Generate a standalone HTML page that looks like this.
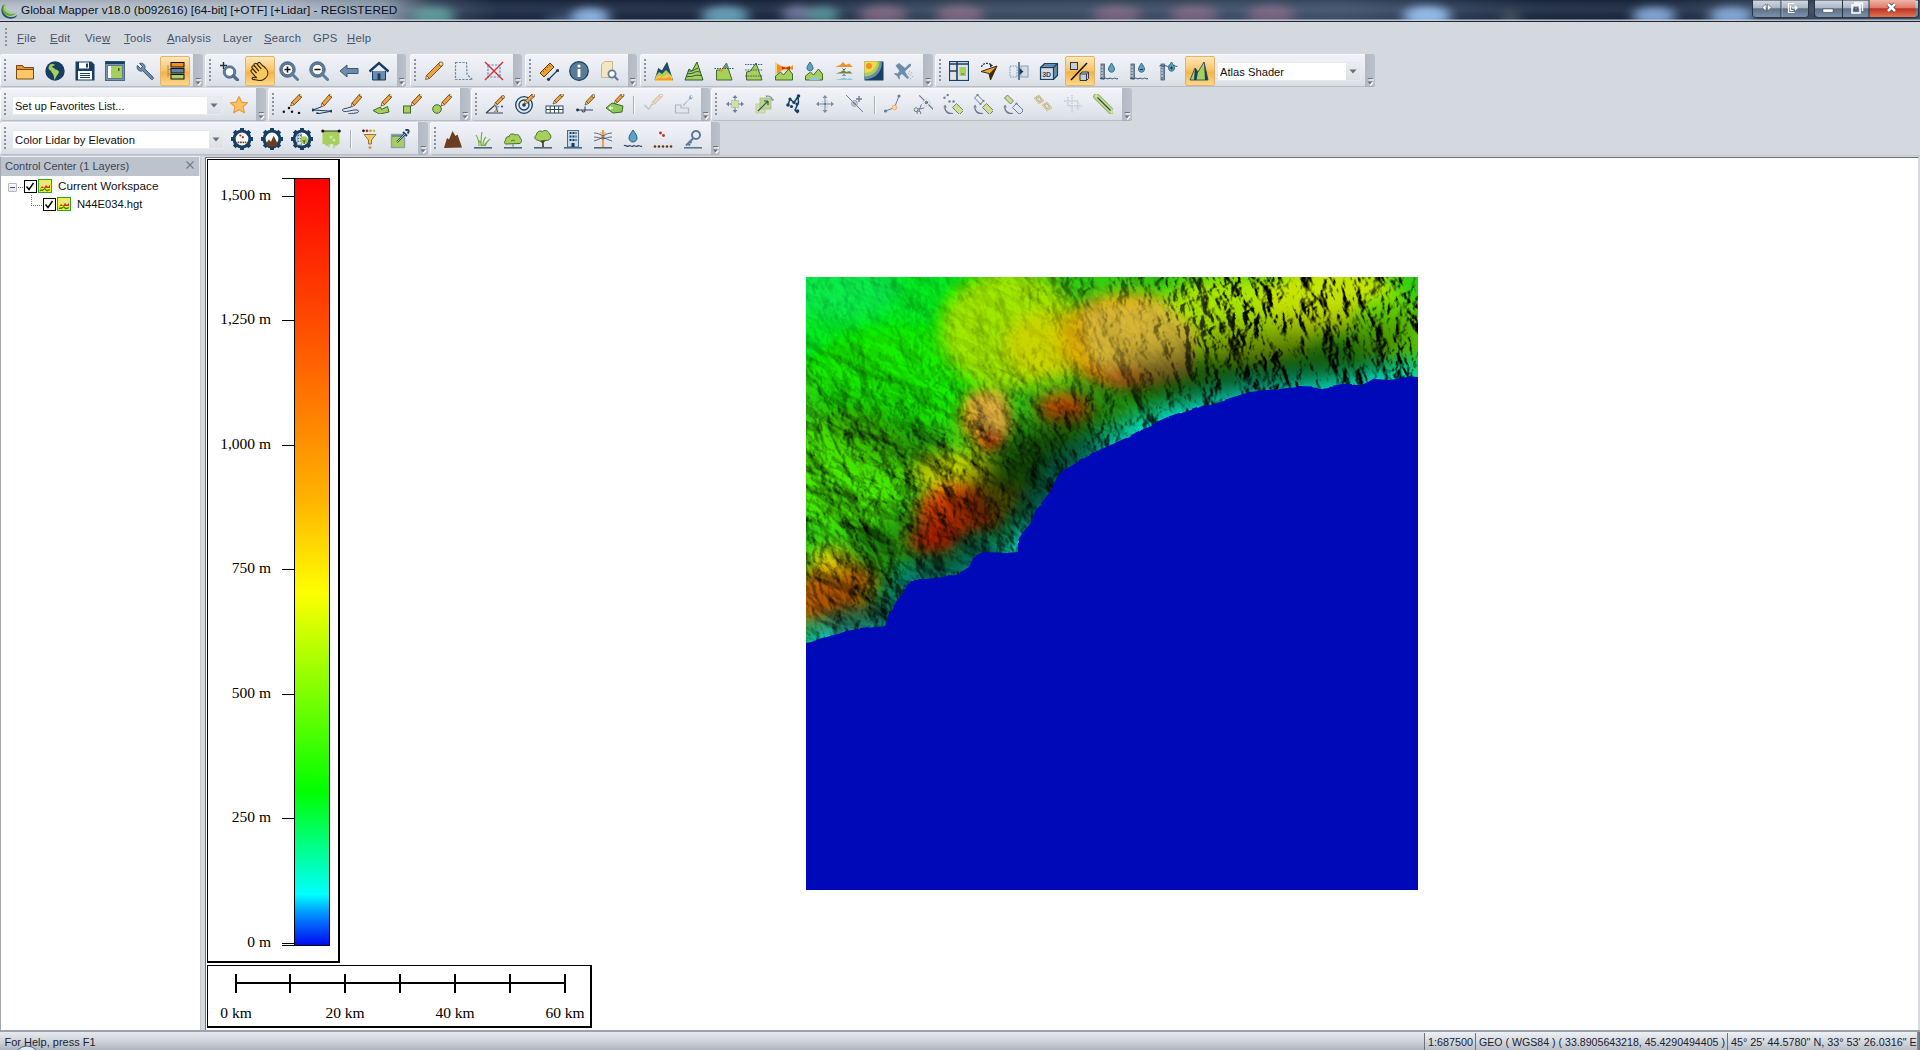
<!DOCTYPE html><html><head><meta charset="utf-8"><style>
*{margin:0;padding:0;box-sizing:border-box}
html,body{width:1920px;height:1050px;overflow:hidden;background:#d4d8df;font-family:"Liberation Sans",sans-serif;font-size:12px;color:#1e2a3a}
.a{position:absolute}
.menu{top:32px;font-size:11.3px;letter-spacing:.25px;color:#45536a;line-height:13px}
.menu u{text-decoration:underline;text-underline-offset:1px;text-decoration-thickness:1px}
.tb{position:absolute;background:linear-gradient(#f1f3f7,#e8ebf1 45%,#dfe3ea 80%,#d6dae2);border-radius:3px 0 0 3px;box-shadow:inset 1px 1px 0 #f8f9fb,inset 0 -1px 0 #b9bec6}
.tab{position:absolute;background:linear-gradient(90deg,#b3b9c3,#bcc2cb);border-radius:0 3px 3px 0;box-shadow:inset 0 -1px 0 #a9aeb7}
.grip{position:absolute;width:2px;background:repeating-linear-gradient(#8b929d 0 2px,transparent 2px 4px)}
.grips{position:absolute;width:2px;background:repeating-linear-gradient(transparent 0 1px,#fdfdfe 1px 3px,transparent 3px 4px)}
.ic{position:absolute;width:22px;height:22px}
.hl{position:absolute;width:30px;height:30px;border:1px solid #e2b46a;border-radius:2px;background:linear-gradient(#fde7b8,#f9c56e 45%,#f6b24a 55%,#fcd88c)}
.dd{position:absolute;background:#fff;border:1px solid #e3e6eb}
.ddb{position:absolute;background:linear-gradient(#eceef2,#dfe2e8);}
.ddtxt{position:absolute;font-size:11.5px;color:#111;line-height:14px}
.sep{position:absolute;width:1px;height:19px;background:#aab0ba;box-shadow:1px 0 0 #fbfcfd}
.serif{position:absolute;font-family:"Liberation Serif",serif;font-size:15.5px;color:#000;line-height:16px;white-space:nowrap}
</style></head><body>
<svg class="a" style="left:0;top:0" width="1920" height="21" viewBox="0 0 1920 21">
<defs><linearGradient id="tbg" x1="0" x2="1920" gradientUnits="userSpaceOnUse">
<stop offset="0" stop-color="#b8c3d0"/><stop offset=".14" stop-color="#b5c0ce"/><stop offset=".2" stop-color="#8e9db0"/><stop offset=".225" stop-color="#3a4a62"/><stop offset=".26" stop-color="#1c2a43"/>
<stop offset=".4" stop-color="#1b2841"/><stop offset=".46" stop-color="#2e3f58"/><stop offset=".5" stop-color="#38495f"/><stop offset=".7" stop-color="#3e506a"/><stop offset=".75" stop-color="#2e3e58"/>
<stop offset=".8" stop-color="#1c2a42"/><stop offset=".86" stop-color="#1a2740"/><stop offset=".92" stop-color="#34465f"/><stop offset="1" stop-color="#3c4e68"/></linearGradient>
<linearGradient id="tvg" x1="0" y1="0" x2="0" y2="1"><stop offset="0" stop-color="#000" stop-opacity=".12"/><stop offset=".5" stop-color="#fff" stop-opacity=".06"/><stop offset="1" stop-color="#000" stop-opacity="0"/></linearGradient>
<filter id="tblur" x="-50%" y="-100%" width="200%" height="300%"><feGaussianBlur stdDeviation="6 4"/></filter></defs>
<rect width="1920" height="21" fill="url(#tbg)"/><g filter="url(#tblur)"><ellipse cx="433" cy="16" rx="22" ry="9" fill="#5fa3a3" opacity="0.9"/><ellipse cx="560" cy="20" rx="14" ry="5" fill="#6a90c0" opacity="0.5"/><ellipse cx="590" cy="17" rx="20" ry="9" fill="#8db4e4" opacity="1"/><ellipse cx="725" cy="16" rx="24" ry="10" fill="#6aa8c2" opacity="0.9"/><ellipse cx="798" cy="14" rx="16" ry="9" fill="#7a80a8" opacity="0.8"/><ellipse cx="823" cy="15" rx="16" ry="9" fill="#5aa4a4" opacity="0.8"/><ellipse cx="883" cy="15" rx="24" ry="10" fill="#8a6a86" opacity="0.8"/><ellipse cx="960" cy="15" rx="24" ry="10" fill="#8a6a86" opacity="0.8"/><ellipse cx="1117" cy="15" rx="24" ry="10" fill="#8a6a8a" opacity="0.75"/><ellipse cx="1194" cy="15" rx="24" ry="10" fill="#8a6a8a" opacity="0.75"/><ellipse cx="1271" cy="15" rx="24" ry="10" fill="#8a6a8a" opacity="0.75"/><ellipse cx="1427" cy="16" rx="24" ry="10" fill="#92bbea" opacity="1"/><ellipse cx="1510" cy="18" rx="10" ry="6" fill="#8a8a8a" opacity="0.4"/><ellipse cx="1654" cy="16" rx="22" ry="9" fill="#8cb4e4" opacity="0.9"/><ellipse cx="1731" cy="16" rx="22" ry="9" fill="#8cb4e4" opacity="0.9"/></g><rect width="1920" height="21" fill="url(#tvg)"/>
<rect y="19.5" width="1920" height="1.5" fill="#d0d8e0" opacity=".85"/></svg>
<div class="a" style="left:0;top:21px;width:1920px;height:1px;background:#1f242c"></div>
<div class="a" style="left:21px;top:3px;font-size:11.8px;color:#0b1019;line-height:15px;white-space:nowrap">Global Mapper v18.0 (b092616) [64-bit] [+OTF] [+Lidar] - REGISTERED</div>
<svg class="a" style="left:0;top:1px" width="18" height="19" viewBox="0 0 18 19"><path d="M3 4C0 8 1 15 7 17s10-1 10-3c-2 2-7 3-10 1S2 9 5 5z" fill="#1d4e6e"/><path d="M4 3C1 7 2 13 7 14.5s8-1 9-2.5c-2 1-6 1.5-8 0S3 8 6 4.5z" fill="#6aaa3a"/><path d="M5 3.5C3 6 3.5 10 7 11.5c2 .8 5 .5 6.5-.5-2 0-4.5-.5-6-2S5 5 6.5 4z" fill="#a8d070"/></svg>
<svg class="a" style="left:1752px;top:0" width="168" height="20" viewBox="0 0 168 20">
<defs><linearGradient id="cb" x1="0" y1="0" x2="0" y2="1"><stop offset="0" stop-color="#d4dbe3"/><stop offset=".45" stop-color="#aab6c4"/><stop offset=".5" stop-color="#5d6f86"/><stop offset="1" stop-color="#7d93ad"/></linearGradient>
<linearGradient id="cr" x1="0" y1="0" x2="0" y2="1"><stop offset="0" stop-color="#f0b4a8"/><stop offset=".45" stop-color="#dc7a6a"/><stop offset=".5" stop-color="#c0321e"/><stop offset="1" stop-color="#e07a5a"/></linearGradient></defs>
<path d="M.5 0v14c0 2 1.5 3.5 3.5 3.5h49c2 0 3.5-1.5 3.5-3.5V0z" fill="url(#cb)" stroke="#2a3240" stroke-width="1"/>
<path d="M29 0v17.5" stroke="#2a3240" stroke-width="1"/><path d="M30 0v17" stroke="#e0e6ec" stroke-width=".7" opacity=".6"/>
<path d="M62.5 0v14c0 2 1.5 3.5 3.5 3.5h97c2 0 3.5-1.5 3.5-3.5V0z" fill="url(#cb)" stroke="#2a3240" stroke-width="1"/>
<path d="M117 0h46.5v14c0 2-1.5 3.5-3.5 3.5h-43z" fill="url(#cr)"/>
<path d="M62.5 0v14c0 2 1.5 3.5 3.5 3.5h97c2 0 3.5-1.5 3.5-3.5V0" fill="none" stroke="#2a3240" stroke-width="1"/>
<path d="M90.5 0v17.5M117 0v17.5" stroke="#2a3240" stroke-width="1"/>
<path d="M10 7.5l4-3.5v7zM19.5 7.5l-4-3.5v7z" fill="#fff" stroke="#3a4450" stroke-width=".5"/>
<path d="M36.5 3.5h6M36.5 3.5v9h6M38.5 5.5v5h3M40 8h5M43 6l2 2-2 2" stroke="#fff" stroke-width="1.2" fill="none"/>
<rect x="71" y="9" width="10" height="3.2" fill="#fff" stroke="#3a4450" stroke-width=".5"/>
<rect x="100" y="5" width="8" height="8" fill="none" stroke="#fff" stroke-width="1.6"/><rect x="102.5" y="7.5" width="3" height="3" fill="none" stroke="#3a4450" stroke-width=".6"/><path d="M102 3h8.5v8" stroke="#fff" stroke-width="1.4" fill="none"/>
<path d="M136 4l7 7M143 4l-7 7" stroke="#3a4450" stroke-width="4"/><path d="M136 4l7 7M143 4l-7 7" stroke="#fff" stroke-width="2.6"/>
</svg>
<div class="grip" style="left:5px;top:28px;height:20px"></div>
<div class="a menu" style="left:17px"><u>F</u>ile</div>
<div class="a menu" style="left:50px"><u>E</u>dit</div>
<div class="a menu" style="left:85px">Vie<u>w</u></div>
<div class="a menu" style="left:124px"><u>T</u>ools</div>
<div class="a menu" style="left:167px"><u>A</u>nalysis</div>
<div class="a menu" style="left:223px">Layer</div>
<div class="a menu" style="left:264px"><u>S</u>earch</div>
<div class="a menu" style="left:313px">GPS</div>
<div class="a menu" style="left:347px"><u>H</u>elp</div>
<div class="tb" style="left:0px;top:54px;width:193px;height:33px"></div>
<div class="tab" style="left:193px;top:54px;width:10px;height:33px"></div>
<svg class="a" style="left:193px;top:75px" width="10" height="12" viewBox="0 0 10 12"><rect x="2.7" y="3" width="5" height="1.2" fill="#6d737d"/><rect x="3.5" y="4.3" width="5" height="1.2" fill="#fbfcfd"/><path d="M2.5 6.5h5.2l-2.6 3z" fill="#6d737d"/><path d="M5.2 10.5l2.8-3.2" stroke="#fbfcfd" stroke-width="1.4"/></svg>
<div class="grip" style="left:4px;top:59px;height:23px"></div>
<div class="tb" style="left:205px;top:54px;width:192px;height:33px"></div>
<div class="tab" style="left:397px;top:54px;width:9px;height:33px"></div>
<svg class="a" style="left:397px;top:75px" width="9" height="12" viewBox="0 0 9 12"><rect x="2.2" y="3" width="5" height="1.2" fill="#6d737d"/><rect x="3.0" y="4.3" width="5" height="1.2" fill="#fbfcfd"/><path d="M2.0 6.5h5.2l-2.6 3z" fill="#6d737d"/><path d="M4.7 10.5l2.8-3.2" stroke="#fbfcfd" stroke-width="1.4"/></svg>
<div class="grip" style="left:209px;top:59px;height:23px"></div>
<div class="tb" style="left:410px;top:54px;width:103px;height:33px"></div>
<div class="tab" style="left:513px;top:54px;width:9px;height:33px"></div>
<svg class="a" style="left:513px;top:75px" width="9" height="12" viewBox="0 0 9 12"><rect x="2.2" y="3" width="5" height="1.2" fill="#6d737d"/><rect x="3.0" y="4.3" width="5" height="1.2" fill="#fbfcfd"/><path d="M2.0 6.5h5.2l-2.6 3z" fill="#6d737d"/><path d="M4.7 10.5l2.8-3.2" stroke="#fbfcfd" stroke-width="1.4"/></svg>
<div class="grip" style="left:414px;top:59px;height:23px"></div>
<div class="tb" style="left:525px;top:54px;width:103px;height:33px"></div>
<div class="tab" style="left:628px;top:54px;width:9px;height:33px"></div>
<svg class="a" style="left:628px;top:75px" width="9" height="12" viewBox="0 0 9 12"><rect x="2.2" y="3" width="5" height="1.2" fill="#6d737d"/><rect x="3.0" y="4.3" width="5" height="1.2" fill="#fbfcfd"/><path d="M2.0 6.5h5.2l-2.6 3z" fill="#6d737d"/><path d="M4.7 10.5l2.8-3.2" stroke="#fbfcfd" stroke-width="1.4"/></svg>
<div class="grip" style="left:529px;top:59px;height:23px"></div>
<div class="tb" style="left:640px;top:54px;width:283px;height:33px"></div>
<div class="tab" style="left:923px;top:54px;width:10px;height:33px"></div>
<svg class="a" style="left:923px;top:75px" width="10" height="12" viewBox="0 0 10 12"><rect x="2.7" y="3" width="5" height="1.2" fill="#6d737d"/><rect x="3.5" y="4.3" width="5" height="1.2" fill="#fbfcfd"/><path d="M2.5 6.5h5.2l-2.6 3z" fill="#6d737d"/><path d="M5.2 10.5l2.8-3.2" stroke="#fbfcfd" stroke-width="1.4"/></svg>
<div class="grip" style="left:644px;top:59px;height:23px"></div>
<div class="tb" style="left:935px;top:54px;width:430px;height:33px"></div>
<div class="tab" style="left:1365px;top:54px;width:10px;height:33px"></div>
<svg class="a" style="left:1365px;top:75px" width="10" height="12" viewBox="0 0 10 12"><rect x="2.7" y="3" width="5" height="1.2" fill="#6d737d"/><rect x="3.5" y="4.3" width="5" height="1.2" fill="#fbfcfd"/><path d="M2.5 6.5h5.2l-2.6 3z" fill="#6d737d"/><path d="M5.2 10.5l2.8-3.2" stroke="#fbfcfd" stroke-width="1.4"/></svg>
<div class="grip" style="left:939px;top:59px;height:23px"></div>
<div class="tb" style="left:0px;top:88px;width:256px;height:33px"></div>
<div class="tab" style="left:256px;top:88px;width:10px;height:33px"></div>
<svg class="a" style="left:256px;top:109px" width="10" height="12" viewBox="0 0 10 12"><rect x="2.7" y="3" width="5" height="1.2" fill="#6d737d"/><rect x="3.5" y="4.3" width="5" height="1.2" fill="#fbfcfd"/><path d="M2.5 6.5h5.2l-2.6 3z" fill="#6d737d"/><path d="M5.2 10.5l2.8-3.2" stroke="#fbfcfd" stroke-width="1.4"/></svg>
<div class="grip" style="left:4px;top:93px;height:23px"></div>
<div class="tb" style="left:268px;top:88px;width:192px;height:33px"></div>
<div class="tab" style="left:460px;top:88px;width:10px;height:33px"></div>
<svg class="a" style="left:460px;top:109px" width="10" height="12" viewBox="0 0 10 12"><rect x="2.7" y="3" width="5" height="1.2" fill="#6d737d"/><rect x="3.5" y="4.3" width="5" height="1.2" fill="#fbfcfd"/><path d="M2.5 6.5h5.2l-2.6 3z" fill="#6d737d"/><path d="M5.2 10.5l2.8-3.2" stroke="#fbfcfd" stroke-width="1.4"/></svg>
<div class="grip" style="left:272px;top:93px;height:23px"></div>
<div class="tb" style="left:471px;top:88px;width:230px;height:33px"></div>
<div class="tab" style="left:701px;top:88px;width:9px;height:33px"></div>
<svg class="a" style="left:701px;top:109px" width="9" height="12" viewBox="0 0 9 12"><rect x="2.2" y="3" width="5" height="1.2" fill="#6d737d"/><rect x="3.0" y="4.3" width="5" height="1.2" fill="#fbfcfd"/><path d="M2.0 6.5h5.2l-2.6 3z" fill="#6d737d"/><path d="M4.7 10.5l2.8-3.2" stroke="#fbfcfd" stroke-width="1.4"/></svg>
<div class="grip" style="left:475px;top:93px;height:23px"></div>
<div class="tb" style="left:711px;top:88px;width:411px;height:33px"></div>
<div class="tab" style="left:1122px;top:88px;width:10px;height:33px"></div>
<svg class="a" style="left:1122px;top:109px" width="10" height="12" viewBox="0 0 10 12"><rect x="2.7" y="3" width="5" height="1.2" fill="#6d737d"/><rect x="3.5" y="4.3" width="5" height="1.2" fill="#fbfcfd"/><path d="M2.5 6.5h5.2l-2.6 3z" fill="#6d737d"/><path d="M5.2 10.5l2.8-3.2" stroke="#fbfcfd" stroke-width="1.4"/></svg>
<div class="grip" style="left:715px;top:93px;height:23px"></div>
<div class="tb" style="left:0px;top:122px;width:418px;height:33px"></div>
<div class="tab" style="left:418px;top:122px;width:10px;height:33px"></div>
<svg class="a" style="left:418px;top:143px" width="10" height="12" viewBox="0 0 10 12"><rect x="2.7" y="3" width="5" height="1.2" fill="#6d737d"/><rect x="3.5" y="4.3" width="5" height="1.2" fill="#fbfcfd"/><path d="M2.5 6.5h5.2l-2.6 3z" fill="#6d737d"/><path d="M5.2 10.5l2.8-3.2" stroke="#fbfcfd" stroke-width="1.4"/></svg>
<div class="grip" style="left:4px;top:127px;height:23px"></div>
<div class="tb" style="left:430px;top:122px;width:281px;height:33px"></div>
<div class="tab" style="left:711px;top:122px;width:9px;height:33px"></div>
<svg class="a" style="left:711px;top:143px" width="9" height="12" viewBox="0 0 9 12"><rect x="2.2" y="3" width="5" height="1.2" fill="#6d737d"/><rect x="3.0" y="4.3" width="5" height="1.2" fill="#fbfcfd"/><path d="M2.0 6.5h5.2l-2.6 3z" fill="#6d737d"/><path d="M4.7 10.5l2.8-3.2" stroke="#fbfcfd" stroke-width="1.4"/></svg>
<div class="grip" style="left:434px;top:127px;height:23px"></div>
<div class="a" style="left:0;top:155px;width:1920px;height:1px;background:#c2c7ce"></div>
<div class="hl" style="left:160px;top:56px"></div>
<div class="hl" style="left:245px;top:56px"></div>
<div class="hl" style="left:1065px;top:56px"></div>
<div class="hl" style="left:1185px;top:56px"></div>
<svg class="a" style="left:15px;top:61px" width="20" height="20" viewBox="0 0 20 20"><path d="M1.5 4.5h6l1.5 2h9.5v11.5h-17z" fill="#fcc865" stroke="#7a4a12" stroke-width="1"/><path d="M1.5 4.5h6l1.5 2h9.5v2h-17z" fill="#eb922e" stroke="#7a4a12" stroke-width="1"/></svg>
<svg class="a" style="left:45px;top:61px" width="20" height="20" viewBox="0 0 20 20"><circle cx="10" cy="10" r="9.7" fill="#173f63"/><path d="M5 3.5c2-1 4-.5 5 .5-1 1-2.5.5-3 2 1 1 2.5 1 3.5 2.5 1.5.2 3 .8 3.5 2.5-.5 2-2 3-3 5-.5 1-1 2.5-1.5 3-.3-2-.5-3.5-1-5-.5-1.5-2-2.5-2.5-4-1-1-2.5-1.5-2.5-3 .3-1.5 1-2.5 1.5-3.5z" fill="#a6cf5c"/></svg>
<svg class="a" style="left:75px;top:61px" width="20" height="20" viewBox="0 0 20 20"><path d="M.5 .5h16l3 3v16h-19z" fill="#173f63"/><rect x="4" y="1.5" width="10" height="6" fill="#fff"/><rect x="11" y="2.5" width="2" height="4" fill="#173f63"/><rect x="3" y="10" width="14" height="8.5" fill="#fff"/><path d="M5 12.5h10M5 14.5h10M5 16.5h10" stroke="#173f63" stroke-width="1"/></svg>
<svg class="a" style="left:105px;top:61px" width="20" height="20" viewBox="0 0 20 20"><rect x=".5" y=".5" width="19" height="19" fill="#7b96b0" stroke="#4a6680"/><rect x=".5" y=".5" width="19" height="2.5" fill="#173f63"/><rect x="2.5" y="4.5" width="15" height="13" fill="#fff" stroke="#4a6680" stroke-width=".8"/><rect x="6" y="5" width="11" height="12" fill="#a6cf5c"/><rect x="13" y="7" width="1.5" height="3" fill="#3a5a2a"/></svg>
<svg class="a" style="left:135px;top:61px" width="20" height="20" viewBox="0 0 20 20"><path d="M2.5 4.5l3 3 2-2-3-3c2.5-1 5 .5 5.5 3 .2 1-.1 1.8-.3 2.3l8.3 8.3c.6.6.6 1.4 0 2-.6.6-1.4.6-2 0l-8.3-8.3c-.5.2-1.4.5-2.3.3-2.5-.5-4-3-3-5.7z" fill="#6d8cab" stroke="#3d5772" stroke-width="1"/></svg>
<svg class="a" style="left:165px;top:61px" width="20" height="20" viewBox="0 0 20 20"><path d="M3 4v12M3 8.5h3M3 13h3" stroke="#b08a4a" stroke-width="1" fill="none"/><rect x="6" y="1.5" width="13" height="4.5" fill="#f08c2a" stroke="#111" stroke-width="1"/><rect x="6" y="7.5" width="13" height="4.5" fill="#5a82b4" stroke="#111" stroke-width="1"/><rect x="6" y="13.5" width="13" height="4.5" fill="#a8d468" stroke="#111" stroke-width="1"/></svg>
<svg class="a" style="left:219px;top:61px" width="20" height="20" viewBox="0 0 20 20"><path d="M1 4.5h7M4.5 1v7" stroke="#1f2f40" stroke-width="1.4"/><circle cx="10.5" cy="11" r="5" fill="#fff" stroke="#5d7d9a" stroke-width="2.6"/><circle cx="10.5" cy="11" r="6.3" fill="none" stroke="#33506b" stroke-width=".6"/><path d="M14.5 15l4 4" stroke="#5d7d9a" stroke-width="3" stroke-linecap="round"/><path d="M14.5 15l4 4" stroke="#33506b" stroke-width="3.8" stroke-linecap="round" opacity=".35"/></svg>
<svg class="a" style="left:249px;top:61px" width="20" height="20" viewBox="0 0 20 20"><g transform="translate(10 10) rotate(-42) scale(.98) translate(-10 -10)"><path d="M3.5 9.5V13.5L1.2 11C.3 10 -1 11 -.2 12.3L3.8 17.5C5.3 19.3 7.5 19.8 10 19.8 14 19.8 16.8 17.2 16.8 13V9.5Z" fill="#f6c860" stroke="#3a2808" stroke-width="1.1" stroke-linejoin="round"/><rect x="3.6" y="4" width="3.2" height="9" rx="1.6" fill="#f6c860" stroke="#3a2808" stroke-width="1.1"/><rect x="6.8" y="1.8" width="3.2" height="11.2" rx="1.6" fill="#f6c860" stroke="#3a2808" stroke-width="1.1"/><rect x="10" y="1.5" width="3.2" height="11.5" rx="1.6" fill="#f6c860" stroke="#3a2808" stroke-width="1.1"/><rect x="13.2" y="3.2" width="3.2" height="9.8" rx="1.6" fill="#f6c860" stroke="#3a2808" stroke-width="1.1"/><rect x="4.2" y="10" width="12" height="5" fill="#f6c860"/></g></svg>
<svg class="a" style="left:279px;top:61px" width="20" height="20" viewBox="0 0 20 20"><circle cx="8.5" cy="8.5" r="6.5" fill="#fff" stroke="#5d7d9a" stroke-width="2.4"/><circle cx="8.5" cy="8.5" r="7.8" fill="none" stroke="#2e4a64" stroke-width=".7"/><circle cx="8.5" cy="8.5" r="5.2" fill="none" stroke="#2e4a64" stroke-width=".7"/><path d="M13.5 13.5l5 5" stroke="#5d7d9a" stroke-width="3" stroke-linecap="round"/><path d="M5.5 8.5h6M8.5 5.5v6" stroke="#111" stroke-width="1.5"/></svg>
<svg class="a" style="left:309px;top:61px" width="20" height="20" viewBox="0 0 20 20"><circle cx="8.5" cy="8.5" r="6.5" fill="#fff" stroke="#5d7d9a" stroke-width="2.4"/><circle cx="8.5" cy="8.5" r="7.8" fill="none" stroke="#2e4a64" stroke-width=".7"/><circle cx="8.5" cy="8.5" r="5.2" fill="none" stroke="#2e4a64" stroke-width=".7"/><path d="M13.5 13.5l5 5" stroke="#5d7d9a" stroke-width="3" stroke-linecap="round"/><path d="M5.5 8.5h6" stroke="#111" stroke-width="1.5"/></svg>
<svg class="a" style="left:339px;top:61px" width="20" height="20" viewBox="0 0 20 20"><path d="M1 10l7-6v3.5h11v5H8V16z" fill="#6d8cab" stroke="#3d5772" stroke-width="1" stroke-linejoin="round"/></svg>
<svg class="a" style="left:369px;top:61px" width="20" height="20" viewBox="0 0 20 20"><path d="M3.5 10v9h13v-9" fill="#6d8cab" stroke="#173f63" stroke-width="1"/><path d="M.5 10.5L10 2l9.5 8.5" fill="none" stroke="#173f63" stroke-width="2.4"/><rect x="8.5" y="12.5" width="3" height="6.5" fill="#173f63"/></svg>
<svg class="a" style="left:424px;top:61px" width="20" height="20" viewBox="0 0 20 20"><path d="M5.5 17.5L18.5 4.5L15.5 1.5L2.5 14.5Z" fill="#f1a23c" stroke="#5b3a12" stroke-width=".8"/><path d="M1.5 18.5L5.5 17.5L2.5 14.5Z" fill="#f6dca0" stroke="#5b3a12" stroke-width=".7"/><circle cx="17.0" cy="3.0" r="2.1" fill="#f6dca0" stroke="#5b3a12" stroke-width=".7"/></svg>
<svg class="a" style="left:454px;top:61px" width="20" height="20" viewBox="0 0 20 20"><path d="M1.5 1.5h11l.5 12 5.5 5h-17z" fill="none" stroke="#6585a6" stroke-width="1.2" stroke-dasharray="2.2 1.3"/></svg>
<svg class="a" style="left:484px;top:61px" width="20" height="20" viewBox="0 0 20 20"><rect x="4" y="4" width="12" height="12" fill="none" stroke="#6585a6" stroke-width="1.2" stroke-dasharray="2.2 1.3"/><path d="M1 1l18 18M19 1L1 19" stroke="#d2303c" stroke-width="1.4"/></svg>
<svg class="a" style="left:539px;top:61px" width="20" height="20" viewBox="0 0 20 20"><path d="M1 12L11 2l4 4L5 16z" fill="#f0a030" stroke="#5b3a12" stroke-width="1"/><path d="M4 10l1 1M6 8l1.5 1.5M8 6l1 1M10 4l1.5 1.5" stroke="#5b3a12" stroke-width=".7"/><path d="M9.5 18.5l9-9" stroke="#173f63" stroke-width="1.2"/><circle cx="9.5" cy="18.3" r="1.6" fill="#173f63"/><circle cx="18.5" cy="9.5" r="1.6" fill="#173f63"/></svg>
<svg class="a" style="left:569px;top:61px" width="20" height="20" viewBox="0 0 20 20"><circle cx="10" cy="10" r="9.3" fill="#5a7b98" stroke="#173f63" stroke-width="1.2"/><rect x="8.6" y="8" width="2.8" height="8" fill="#fff"/><circle cx="10" cy="5" r="1.6" fill="#fff"/></svg>
<svg class="a" style="left:599px;top:61px" width="20" height="20" viewBox="0 0 20 20"><path d="M2.5 3.5l3-3h8v16h-11z" fill="#f3e6c2" stroke="#c9b88e" stroke-width="1"/><circle cx="13" cy="13" r="3.6" fill="#fff" stroke="#5d7d9a" stroke-width="1.8"/><path d="M15.5 15.5l3 3" stroke="#5d7d9a" stroke-width="2.2" stroke-linecap="round"/></svg>
<svg class="a" style="left:654px;top:61px" width="20" height="20" viewBox="0 0 20 20"><path d="M1 19L4.5 7.5 8 10l5-8.5 5.5 17.5z" fill="#1e4a6c" stroke="#1e3a50" stroke-width=".8"/><path d="M2 15l3-4 3 2 4-4 5 5 1.5 5H1z" fill="#a6cf5c"/><path d="M1.5 17l3-2.5 4 1.5 4.5-3 5 2.5.5 4.5H1z" fill="#f5c74a"/><path d="M1 18.5l5-1.5 5 .5 5-1.5 2.5 3H1z" fill="#f09a2a"/></svg>
<svg class="a" style="left:684px;top:61px" width="20" height="20" viewBox="0 0 20 20"><path d="M1 19L5 8l3 2 5-9 6 18z" fill="#a6cf5c" stroke="#2a5a3a" stroke-width="1"/><path d="M3 13c2-1 4 0 6-1s4-2 7-1M2.3 16c2-1 5 0 7-1s5-1 8-.5M4 10c2 0 3 .5 5-.5s3-2 5-2" stroke="#2a5a3a" stroke-width="1" fill="none"/></svg>
<svg class="a" style="left:714px;top:61px" width="20" height="20" viewBox="0 0 20 20"><path d="M2.5 19V9h5l5-7 5.5 17z" fill="#a6cf5c" stroke="#3f6a2a" stroke-width="1"/><path d="M10 7l2.5-5 2.5 5z" fill="#6a8aa8"/><path d="M.5 7.5h19" stroke="#33506b" stroke-width="1" stroke-dasharray="1.5 1"/><path d="M5.5 8l2 4 2-4z" fill="#f0902a"/></svg>
<svg class="a" style="left:744px;top:61px" width="20" height="20" viewBox="0 0 20 20"><path d="M2.5 19V11l4-1 5.5-8 6 17z" fill="#a6cf5c" stroke="#3f6a2a" stroke-width="1"/><path d="M1 3.5h18M1 9h18M1 15h18" stroke="#33506b" stroke-width=".9" stroke-dasharray="1.6 1"/></svg>
<svg class="a" style="left:774px;top:61px" width="20" height="20" viewBox="0 0 20 20"><path d="M1 1l7 4 11 0v3l-11 2L1 14z" fill="#f8d27a"/><path d="M3 3l6 3h8l2-2v5l-3-1-7 .5-6 4z" fill="#f0902a"/><path d="M8 5.5l4 1.5 4-2v4l-4-1.5-4 1z" fill="#c82828"/><path d="M1.5 19v-4l5-4 3 3 5-6 4 5v6z" fill="#a6cf5c" stroke="#3f6a2a" stroke-width="1"/></svg>
<svg class="a" style="left:804px;top:61px" width="20" height="20" viewBox="0 0 20 20"><path d="M6 1c-1.5 2.5-3 4-3 6 0 1.6 1.3 2.8 3 2.8s3-1.2 3-2.8c0-2-1.5-3.5-3-6z" fill="#5aa4c8" stroke="#2e5a78" stroke-width=".9"/><path d="M1.5 19v-4l5-4 3 3 5-6 4 5v6z" fill="#a6cf5c" stroke="#3f6a2a" stroke-width="1"/><path d="M5 19l3-3h5l3 3z" fill="#8cc8dc"/></svg>
<svg class="a" style="left:834px;top:61px" width="20" height="20" viewBox="0 0 20 20"><path d="M1 6h18l-4-3.5-3 1.5-3-3-3 3z" fill="#f0902a"/><path d="M1.5 12.5h17l-3-2.5-3 1-3-2-3 2z" fill="#6a8a3a"/><path d="M1 19h18l-3-2-3 1-3-1.5-4 1.5z" fill="#8cc8dc"/><path d="M8.5 7.5l1.5 1.5 1.5-1.5M8.5 15l1.5-1.5 1.5 1.5" stroke="#33506b" stroke-width="1" fill="none"/></svg>
<svg class="a" style="left:864px;top:61px" width="20" height="20" viewBox="0 0 20 20"><rect x=".5" y=".5" width="19" height="19" fill="#173f63"/><path d="M.5 .5h17.5c.5 10-7 18-17.5 18z" fill="#6d8cab"/><path d="M.5 .5h15c0 8-6 15-15 15z" fill="#a6cf5c"/><path d="M.5 .5h12.5c0 6-5.5 11.5-12.5 11.5z" fill="#f6d84a"/><circle cx="5" cy="5" r="3" fill="#f0902a"/></svg>
<svg class="a" style="left:894px;top:61px" width="20" height="20" viewBox="0 0 20 20"><path d="M3 3.5l2-1.5 6 5 3.5-3.5c1-1 2.5-1 2.5.5s-1.5 2-2.5 3L11 10.5l4 6.5-1.5 1-5.5-5-2.5 2 .5 2.5-1 1-2-3.5-3-2 1-1 2.5.5 2-2.5-4-5.5z" fill="#6d8cab"/><path d="M12 14l6 5M14 12l5 4M15 10l4 3" stroke="#8aa2b8" stroke-width=".8" stroke-dasharray="1.5 1"/></svg>
<svg class="a" style="left:949px;top:61px" width="20" height="20" viewBox="0 0 20 20"><rect x=".5" y=".5" width="19" height="19" fill="#dfe3e8" stroke="#173f63" stroke-width="1.2"/><path d="M8 .5v19M.5 3h19M.5 10h7.5" stroke="#173f63" stroke-width="1.6"/><rect x="10.5" y="6" width="6.5" height="9" fill="#a6cf5c"/><rect x="12" y="12" width="3.5" height="2" fill="#8aa060"/></svg>
<svg class="a" style="left:979px;top:61px" width="20" height="20" viewBox="0 0 20 20"><path d="M2 10.5L18 5l-6.5 14-1.5-6.5z" fill="#f0a838" stroke="#3a2a10" stroke-width="1"/><path d="M10 13l1.5 6 6.5-14z" fill="#3a2a10"/><path d="M2.5 6c1-4 7-5 10-1.5" stroke="#1f2f40" stroke-width="1.3" fill="none" stroke-dasharray="2 1"/><path d="M11 2.5l3 2-3 2z" fill="#1f2f40"/></svg>
<svg class="a" style="left:1009px;top:61px" width="20" height="20" viewBox="0 0 20 20"><rect x="1" y="5" width="7" height="11" fill="none" stroke="#7d98b2" stroke-width="1" stroke-dasharray="1.6 1"/><rect x="12" y="5" width="7" height="11" fill="#d8dde3" stroke="#8aa0b5" stroke-width="1"/><path d="M10 1v18" stroke="#173f63" stroke-width="1.3"/><path d="M10.5 7l4 3.5-4 3.5z" fill="#173f63"/></svg>
<svg class="a" style="left:1039px;top:61px" width="20" height="20" viewBox="0 0 20 20"><path d="M1.5 6.5l4-4h13v12l-4 4h-13z" fill="#6d8cab" stroke="#173f63" stroke-width="1.2"/><path d="M1.5 6.5h13v12M14.5 6.5l4-4" stroke="#173f63" stroke-width="1.2" fill="none"/><rect x="2.3" y="7.3" width="11.5" height="10.5" fill="#d8dde3"/><text x="3.2" y="15.5" font-family="Liberation Sans" font-size="7" font-weight="bold" fill="#2e4a68">3D</text></svg>
<svg class="a" style="left:1069px;top:61px" width="20" height="20" viewBox="0 0 20 20"><rect x="1.5" y="1.5" width="7" height="7" fill="#c8cdd4" stroke="#2a3a4a" stroke-width="1"/><path d="M2 19L18 2" stroke="#111" stroke-width="1.5"/><path d="M11 13l2-2h6.5v6.5l-2 2H11z" fill="#c8cdd4" stroke="#2a3a4a" stroke-width="1"/><path d="M11 13h6.5v6.5M17.5 13l2-2" stroke="#2a3a4a" stroke-width="1" fill="none"/></svg>
<svg class="a" style="left:1099px;top:61px" width="20" height="20" viewBox="0 0 20 20"><rect x="2" y="3" width="3.5" height="15" fill="#7b8ea2" stroke="#4b5e72" stroke-width=".8"/><path d="M2 6h2M2 9h2M2 12h2M2 15h2" stroke="#fff" stroke-width=".8"/><path d="M12.5 2c-1.5 2.5-3 4.2-3 6.2 0 1.7 1.4 3 3 3s3-1.3 3-3c0-2-1.5-3.7-3-6.2z" fill="#5aa4bd" stroke="#2e5a78" stroke-width=".9"/><path d="M1 17.5c1.5-1.5 3 1.5 4.5 0s3 1.5 4.5 0 3 1.5 4.5 0 3 1.5 4.5 0" stroke="#2e4a68" stroke-width="1" fill="none"/></svg>
<svg class="a" style="left:1129px;top:61px" width="20" height="20" viewBox="0 0 20 20"><rect x="2" y="3" width="3.5" height="15" fill="#7b8ea2" stroke="#4b5e72" stroke-width=".8"/><path d="M2 6h2M2 9h2M2 12h2M2 15h2" stroke="#fff" stroke-width=".8"/><path d="M12.5 2c-1.5 2.5-3 4.2-3 6.2 0 1.7 1.4 3 3 3s3-1.3 3-3c0-2-1.5-3.7-3-6.2z" fill="#5aa4bd" stroke="#2e5a78" stroke-width=".9"/><path d="M11 8.5h3" stroke="#1f2f40" stroke-width="1"/><path d="M1 17.5c1.5-1.5 3 1.5 4.5 0s3 1.5 4.5 0 3 1.5 4.5 0 3 1.5 4.5 0" stroke="#2e4a68" stroke-width="1" fill="none"/></svg>
<svg class="a" style="left:1159px;top:61px" width="20" height="20" viewBox="0 0 20 20"><rect x="2" y="3" width="3.5" height="16" fill="#7b8ea2" stroke="#4b5e72" stroke-width=".8"/><path d="M2 6h2M2 9h2M2 12h2M2 15h2" stroke="#fff" stroke-width=".8"/><path d="M.5 5c1.5-1.5 3 1.5 4.5 0s3 1.5 4.5 0 3 1.5 4.5 0 3 1.5 4.5 0" stroke="#2e4a68" stroke-width="1" fill="none"/><path d="M12.5 1c-1.5 2.5-3 4.2-3 6.2 0 1.7 1.4 3 3 3s3-1.3 3-3c0-2-1.5-3.7-3-6.2z" fill="#5aa4bd" stroke="#2e5a78" stroke-width=".9"/><path d="M11 7h3M12.5 5.5v3" stroke="#1f2f40" stroke-width="1"/></svg>
<svg class="a" style="left:1189px;top:61px" width="20" height="20" viewBox="0 0 20 20"><path d="M1 19l5-12 3 4 6-10 4 18z" fill="#a6cf5c" stroke="#173f63" stroke-width=".8"/><path d="M6 7l3 4-1.5 8H5z" fill="#173f63"/><path d="M15 1l4 18h-3z" fill="#173f63"/></svg>
<div class="a" style="left:1217px;top:62px;width:144px;height:19px;background:#fff;border:1px solid #e6e9ee"></div>
<div class="a" style="left:1346px;top:63px;width:14px;height:17px;background:linear-gradient(#e9ecf0,#dde0e6)"></div>
<svg class="a" style="left:1349px;top:69px" width="8" height="5" viewBox="0 0 8 5"><path d="M.5 .5h7L4 4.5z" fill="#6a7078"/></svg>
<div class="a" style="left:1220px;top:65px;font-size:11.2px;color:#111;line-height:14px;white-space:nowrap">Atlas Shader</div>
<div class="a" style="left:12px;top:96px;width:210px;height:19px;background:#fff;border:1px solid #e6e9ee"></div>
<div class="a" style="left:207px;top:97px;width:14px;height:17px;background:linear-gradient(#e9ecf0,#dde0e6)"></div>
<svg class="a" style="left:210px;top:103px" width="8" height="5" viewBox="0 0 8 5"><path d="M.5 .5h7L4 4.5z" fill="#6a7078"/></svg>
<div class="a" style="left:15px;top:99px;font-size:11.0px;color:#111;line-height:14px;white-space:nowrap">Set up Favorites List...</div>
<svg class="a" style="left:229px;top:95px" width="20" height="20" viewBox="0 0 20 20"><path d="M10 1.5l2.6 5.6 6.1.6-4.6 4.1 1.3 6-5.4-3.1-5.4 3.1 1.3-6L1.3 7.7l6.1-.6z" fill="#fbc062" stroke="#e89a3c" stroke-width="1.1" stroke-linejoin="round"/></svg>
<svg class="a" style="left:282px;top:94px" width="20" height="20" viewBox="0 0 20 20"><path d="M12.2 10.8L20.6 2.3L18.0 -0.3L9.7 8.2Z" fill="#f1a23c" stroke="#5b3a12" stroke-width=".8"/><path d="M8.5 12.0L12.2 10.8L9.7 8.2Z" fill="#f6dca0" stroke="#5b3a12" stroke-width=".7"/><circle cx="19.3" cy="1.0" r="1.8" fill="#f6dca0" stroke="#5b3a12" stroke-width=".7"/><circle cx="1.8" cy="17.8" r="1.25" fill="#111"/><circle cx="7" cy="14" r="1.25" fill="#111"/><circle cx="10" cy="17.7" r="1.25" fill="#111"/><circle cx="17" cy="19" r="1.25" fill="#111"/></svg>
<svg class="a" style="left:312px;top:94px" width="20" height="20" viewBox="0 0 20 20"><path d="M12.6 11.5L20.7 2.2L17.9 -0.2L9.9 9.2Z" fill="#f1a23c" stroke="#5b3a12" stroke-width=".8"/><path d="M9.0 13.0L12.6 11.5L9.9 9.2Z" fill="#f6dca0" stroke="#5b3a12" stroke-width=".7"/><circle cx="19.3" cy="1.0" r="1.8" fill="#f6dca0" stroke="#5b3a12" stroke-width=".7"/><path d="M9 13L.8 16M.8 16l18.8 1.2L5.5 19.8" stroke="#1f3a58" stroke-width="1" fill="none"/><circle cx=".9" cy="16" r="1.4" fill="#173f63"/><circle cx="19.3" cy="17.2" r="1.4" fill="#173f63"/><circle cx="5.5" cy="19.6" r="1.4" fill="#173f63"/></svg>
<svg class="a" style="left:342px;top:94px" width="20" height="20" viewBox="0 0 20 20"><path d="M12.6 11.5L20.7 2.2L17.9 -0.2L9.9 9.2Z" fill="#f1a23c" stroke="#5b3a12" stroke-width=".8"/><path d="M9.0 13.0L12.6 11.5L9.9 9.2Z" fill="#f6dca0" stroke="#5b3a12" stroke-width=".7"/><circle cx="19.3" cy="1.0" r="1.8" fill="#f6dca0" stroke="#5b3a12" stroke-width=".7"/><path d="M9 13c-2 1-5 1-7.5 2s-.5 3 3 2.5 8-2 10.5-1.5 2 2.5-1 3-6 .3-8 1" stroke="#2e4a68" stroke-width="1" fill="none"/></svg>
<svg class="a" style="left:372px;top:94px" width="20" height="20" viewBox="0 0 20 20"><path d="M12.7 10.7L20.6 2.2L18.0 -0.2L10.1 8.2Z" fill="#f1a23c" stroke="#5b3a12" stroke-width=".8"/><path d="M9.0 12.0L12.7 10.7L10.1 8.2Z" fill="#f6dca0" stroke="#5b3a12" stroke-width=".7"/><circle cx="19.3" cy="1.0" r="1.8" fill="#f6dca0" stroke="#5b3a12" stroke-width=".7"/><path d="M1 16.5l7.5-3.5 1 2.5 6-3 1.5 5.5-9.5 2z" fill="#a6cf5c" stroke="#3f6a2a" stroke-width="1"/></svg>
<svg class="a" style="left:402px;top:94px" width="20" height="20" viewBox="0 0 20 20"><path d="M12.7 10.7L20.6 2.2L18.0 -0.2L10.1 8.2Z" fill="#f1a23c" stroke="#5b3a12" stroke-width=".8"/><path d="M9.0 12.0L12.7 10.7L10.1 8.2Z" fill="#f6dca0" stroke="#5b3a12" stroke-width=".7"/><circle cx="19.3" cy="1.0" r="1.8" fill="#f6dca0" stroke="#5b3a12" stroke-width=".7"/><rect x="1.5" y="12" width="7" height="7" fill="#a6cf5c" stroke="#3f6a2a" stroke-width="1"/></svg>
<svg class="a" style="left:432px;top:94px" width="20" height="20" viewBox="0 0 20 20"><path d="M12.7 10.7L20.6 2.2L18.0 -0.2L10.1 8.2Z" fill="#f1a23c" stroke="#5b3a12" stroke-width=".8"/><path d="M9.0 12.0L12.7 10.7L10.1 8.2Z" fill="#f6dca0" stroke="#5b3a12" stroke-width=".7"/><circle cx="19.3" cy="1.0" r="1.8" fill="#f6dca0" stroke="#5b3a12" stroke-width=".7"/><circle cx="5" cy="15" r="4.3" fill="#a6cf5c" stroke="#3f6a2a" stroke-width="1"/></svg>
<svg class="a" style="left:485px;top:94px" width="20" height="20" viewBox="0 0 20 20"><path d="M12.5 10.6L19.1 4.1L16.9 1.9L10.4 8.5Z" fill="#f1a23c" stroke="#5b3a12" stroke-width=".8"/><path d="M9.0 12.0L12.5 10.6L10.4 8.5Z" fill="#f6dca0" stroke="#5b3a12" stroke-width=".7"/><circle cx="18.0" cy="3.0" r="1.5" fill="#f6dca0" stroke="#5b3a12" stroke-width=".7"/><path d="M1 19h17M1 19L9 12" stroke="#33475c" stroke-width="1.2" fill="none"/><text x="9" y="18" font-family="Liberation Serif" font-style="italic" font-size="8" fill="#1f2f40">X</text><circle cx="17" cy="12.5" r=".9" fill="#1f2f40"/></svg>
<svg class="a" style="left:515px;top:94px" width="20" height="20" viewBox="0 0 20 20"><circle cx="9" cy="11" r="8.3" fill="none" stroke="#173f63" stroke-width="1.3"/><circle cx="9" cy="11" r="5" fill="none" stroke="#173f63" stroke-width="1.3"/><circle cx="9" cy="11" r="1.8" fill="#173f63"/><path d="M12.6 8.8L19.6 2.2L17.4 -0.2L10.4 6.4Z" fill="#f1a23c" stroke="#5b3a12" stroke-width=".8"/><path d="M9.0 10.0L12.6 8.8L10.4 6.4Z" fill="#f6dca0" stroke="#5b3a12" stroke-width=".7"/><circle cx="18.5" cy="1.0" r="1.6" fill="#f6dca0" stroke="#5b3a12" stroke-width=".7"/></svg>
<svg class="a" style="left:545px;top:94px" width="20" height="20" viewBox="0 0 20 20"><path d="M11.5 8.6L18.1 2.1L15.9 -0.1L9.4 6.5Z" fill="#f1a23c" stroke="#5b3a12" stroke-width=".8"/><path d="M8.0 10.0L11.5 8.6L9.4 6.5Z" fill="#f6dca0" stroke="#5b3a12" stroke-width=".7"/><circle cx="17.0" cy="1.0" r="1.5" fill="#f6dca0" stroke="#5b3a12" stroke-width=".7"/><rect x="1" y="12" width="17" height="7" fill="#fff" stroke="#33475c" stroke-width="1"/><path d="M1 15.5h17M5.2 12v7M9.5 12v7M13.7 12v7" stroke="#33475c" stroke-width="1"/></svg>
<svg class="a" style="left:575px;top:94px" width="20" height="20" viewBox="0 0 20 20"><path d="M13.5 9.5L19.6 3.0L17.4 1.0L11.3 7.4Z" fill="#f1a23c" stroke="#5b3a12" stroke-width=".8"/><path d="M10.0 11.0L13.5 9.5L11.3 7.4Z" fill="#f6dca0" stroke="#5b3a12" stroke-width=".7"/><circle cx="18.5" cy="2.0" r="1.5" fill="#f6dca0" stroke="#5b3a12" stroke-width=".7"/><path d="M2 16h16M10 12.5v4c0 2-3 2-3 0" stroke="#33475c" stroke-width="1.1" fill="none"/><circle cx="2.5" cy="16" r="1.4" fill="#1f2f40"/></svg>
<svg class="a" style="left:605px;top:94px" width="20" height="20" viewBox="0 0 20 20"><path d="M12.5 8.5L18.6 2.0L16.4 -0.0L10.3 6.4Z" fill="#f1a23c" stroke="#5b3a12" stroke-width=".8"/><path d="M9.0 10.0L12.5 8.5L10.3 6.4Z" fill="#f6dca0" stroke="#5b3a12" stroke-width=".7"/><circle cx="17.5" cy="1.0" r="1.5" fill="#f6dca0" stroke="#5b3a12" stroke-width=".7"/><path d="M1 14l6-5 11 3-1 6-9 1z" fill="#8cc85a" stroke="#3f6a2a" stroke-width="1"/><path d="M4 14h4" stroke="#fff" stroke-width="1.3"/><path d="M6 12.5l-2 1.5 2 1.5" stroke="#fff" stroke-width="1" fill="none"/></svg>
<div class="a" style="left:633px;top:96px;width:1px;height:18px;background:#a9afb9"></div><div class="a" style="left:634px;top:96px;width:1px;height:18px;background:#fafbfc"></div>
<svg class="a" style="left:643px;top:94px" width="20" height="20" viewBox="0 0 20 20"><path d="M1.5 11l4 4 4-5" stroke="#b8c2cc" stroke-width="1.2" fill="none"/><path d="M12.0 9.6L19.1 2.6L16.9 0.4L9.9 7.5Z" fill="#f0d6b4" stroke="#c8b090" stroke-width=".8"/><path d="M8.5 11.0L12.0 9.6L9.9 7.5Z" fill="#f6ece0" stroke="#c8b090" stroke-width=".7"/><circle cx="18.0" cy="1.5" r="1.5" fill="#f6ece0" stroke="#c8b090" stroke-width=".7"/></svg>
<svg class="a" style="left:673px;top:94px" width="20" height="20" viewBox="0 0 20 20"><path d="M2.5 11v8h13v-5H8v-3z" fill="none" stroke="#aeb8c3" stroke-width="1.2"/><path d="M10 11l6-6c-.5-2 1-4 3-4l-1.5 2 1 1 1.5-1.5c0 2-2 3.5-4 3l-5.5 6.5z" fill="#8fa8c0"/></svg>
<svg class="a" style="left:725px;top:94px" width="20" height="20" viewBox="0 0 20 20"><path d="M10 1l2.5 3h-5zM10 19l2.5-3h-5zM1 10l3 2.5v-5zM19 10l-3 2.5v-5z" fill="#6d7e90"/><path d="M10 3v14M3 10h14" stroke="#6d7e90" stroke-width="1"/><rect x="6.5" y="6.5" width="7" height="7" fill="#cfe0a8" stroke="#a0b0a0" stroke-width=".8" stroke-dasharray="1.5 .8"/></svg>
<svg class="a" style="left:755px;top:94px" width="20" height="20" viewBox="0 0 20 20"><rect x="1" y="10" width="9" height="9" fill="#cfe0a8" stroke="#b8c8a0" stroke-width=".8"/><rect x="5" y="4" width="11" height="11" fill="#b8d888" stroke="#a8c080" stroke-width=".8"/><path d="M3 17l10-10M13 7h-4M13 7v4" stroke="#2e4a68" stroke-width="1.1" fill="none"/><path d="M12 2c2 0 5 1 5.5 4.5" stroke="#7a8aa0" stroke-width="1.2" fill="none"/><path d="M10.5 1l2 1-1 2zM16 5.5l2 1.5 1-2z" fill="#7a8aa0"/></svg>
<svg class="a" style="left:785px;top:94px" width="20" height="20" viewBox="0 0 20 20"><path d="M3 11L5 5l4 3.5L13 2.5l.5 6L10 16l3 3" stroke="#173f63" stroke-width="1.5" fill="none"/><circle cx="5" cy="5" r="1.6" fill="#173f63"/><circle cx="9" cy="8.5" r="1.6" fill="#173f63"/><circle cx="13.5" cy="2" r="1.8" fill="#173f63"/><circle cx="3" cy="11" r="1.8" fill="#173f63"/><circle cx="6.5" cy="12.5" r="1.6" fill="#173f63"/><circle cx="12" cy="10" r="1.6" fill="#173f63"/><circle cx="12.5" cy="17" r="1.8" fill="#173f63"/></svg>
<svg class="a" style="left:815px;top:94px" width="20" height="20" viewBox="0 0 20 20"><path d="M10 1l2.5 3h-5zM10 19l2.5-3h-5zM1 10l3 2.5v-5zM19 10l-3 2.5v-5z" fill="#7b8b9b"/><path d="M10 3v14M3 10h14" stroke="#7b8b9b" stroke-width="1"/><circle cx="10" cy="10" r="3.5" fill="none" stroke="#a8b4c0" stroke-width="1" stroke-dasharray="1.5 1"/><circle cx="10" cy="10" r="1.3" fill="#6d7e90"/></svg>
<svg class="a" style="left:845px;top:94px" width="20" height="20" viewBox="0 0 20 20"><path d="M1 1l17 17" stroke="#6d7e90" stroke-width="1"/><circle cx="9.5" cy="9.5" r="2.8" fill="none" stroke="#7d8c9c" stroke-width="1"/><circle cx="9.5" cy="9.5" r="1.2" fill="#6d7e90"/><path d="M14 2v6M11 5h6" stroke="#6d7e90" stroke-width="1.4"/></svg>
<div class="a" style="left:874px;top:96px;width:1px;height:18px;background:#a9afb9"></div><div class="a" style="left:875px;top:96px;width:1px;height:18px;background:#fafbfc"></div>
<svg class="a" style="left:883px;top:94px" width="20" height="20" viewBox="0 0 20 20"><path d="M2.5 17l9-3.5L16 2" stroke="#6d7e90" stroke-width="1" fill="none"/><circle cx="2.5" cy="17" r="1.6" fill="#6d7e90"/><circle cx="16" cy="2" r="1.6" fill="#6d7e90"/><circle cx="11.5" cy="13.5" r="2.3" fill="#fbd9a8" stroke="#f0b070" stroke-width="1"/></svg>
<svg class="a" style="left:913px;top:94px" width="20" height="20" viewBox="0 0 20 20"><path d="M6.2 1.3l5.2 5.2M15.4 10.5l5 5" stroke="#6d7e90" stroke-width="1.1"/><circle cx="13.4" cy="8.5" r="1.7" fill="#6d7e90"/><circle cx="13.4" cy="8.5" r="3.4" fill="none" stroke="#a8b4c0" stroke-width=".7" stroke-dasharray="1.2 1"/><circle cx="3" cy="15.7" r="1.9" fill="none" stroke="#6d7e90" stroke-width="1"/><circle cx="5.9" cy="19" r="1.9" fill="none" stroke="#6d7e90" stroke-width="1"/><path d="M4.7 15l2.2-.5 1.5-4.2M6.3 17.2l.4-2.2 4.6-1.2" stroke="#6d7e90" stroke-width="1" fill="none"/></svg>
<svg class="a" style="left:943px;top:94px" width="20" height="20" viewBox="0 0 20 20"><path d="M2 13.5c-.5 3 2.5 6.5 8 6.3" stroke="#6d7e90" stroke-width="1.5" fill="none"/><path d="M.3 13.5l1.8-3 1.8 3z" fill="#6d7e90"/><circle cx="1.5" cy="3.7" r="1.2" fill="#6d7e90"/><circle cx="4.7" cy="1" r="1.2" fill="#6d7e90"/><circle cx="6.5" cy="7.5" r="1.2" fill="#6d7e90"/><circle cx="10.5" cy="7.5" r="1.2" fill="#6d7e90"/><path d="M9.5 13.5l4-4 7 7-4 4z" fill="#cfe08a" stroke="#6d7e90" stroke-width="1"/></svg>
<svg class="a" style="left:973px;top:94px" width="20" height="20" viewBox="0 0 20 20"><path d="M2 13.5c-.5 3 2.5 6.5 8 6.3" stroke="#6d7e90" stroke-width="1.5" fill="none"/><path d="M.3 13.5l1.8-3 1.8 3z" fill="#6d7e90"/><path d="M1.5 4l3-3 6 6-3 3z" fill="none" stroke="#6d7e90" stroke-width="1"/><circle cx="4.5" cy="1" r="1.1" fill="#6d7e90"/><circle cx="10.5" cy="7" r="1.1" fill="#6d7e90"/><circle cx="7.5" cy="10" r="1.1" fill="#6d7e90"/><path d="M9.5 13.5l4-4 7 7-4 4z" fill="#cfe08a" stroke="#6d7e90" stroke-width="1"/></svg>
<svg class="a" style="left:1003px;top:94px" width="20" height="20" viewBox="0 0 20 20"><path d="M2 13.5c-.5 3 2.5 6.5 8 6.3" stroke="#6d7e90" stroke-width="1.5" fill="none"/><path d="M.3 13.5l1.8-3 1.8 3z" fill="#6d7e90"/><path d="M1.5 4l3-3 6 6-3 3z" fill="#cfe08a" stroke="#6d7e90" stroke-width="1"/><path d="M9.5 13.5l4-4 7 7-4 4z" fill="none" stroke="#6d7e90" stroke-width="1"/><circle cx="13.5" cy="9.5" r="1.1" fill="#6d7e90"/><circle cx="16.5" cy="20.3" r="1.1" fill="#6d7e90"/><circle cx="20.3" cy="16.5" r="1.1" fill="#6d7e90"/></svg>
<svg class="a" style="left:1033px;top:94px" width="20" height="20" viewBox="0 0 20 20"><path d="M1 4l5-3 5 6-5 3z" fill="#d8e8b0" stroke="#f0b888" stroke-width="1"/><path d="M9 11l5-3 5 6-5 3z" fill="#d8e8b0" stroke="#f0b888" stroke-width="1"/><path d="M3 4l3-1.5 3 4-3 1.5zM11 11l3-1.5 3 4-3 1.5z" fill="none" stroke="#8aa0b0" stroke-width=".8"/></svg>
<svg class="a" style="left:1063px;top:94px" width="20" height="20" viewBox="0 0 20 20"><path d="M1 7h14v9M5 3v9h14M9 1v18" stroke="#c0c8d0" stroke-width="1.4" stroke-dasharray="1.5 1" fill="none"/></svg>
<svg class="a" style="left:1093px;top:94px" width="20" height="20" viewBox="0 0 20 20"><path d="M3.5 2.5l15 15" stroke="#8cb060" stroke-width="6.5" stroke-linecap="round"/><path d="M3.5 2.5l15 15" stroke="#c4dea0" stroke-width="4.5" stroke-linecap="round"/><path d="M4.5 3.5l13 13" stroke="#3c4a30" stroke-width="1.2"/></svg>
<div class="a" style="left:12px;top:130px;width:212px;height:19px;background:#fff;border:1px solid #e6e9ee"></div>
<div class="a" style="left:209px;top:131px;width:14px;height:17px;background:linear-gradient(#e9ecf0,#dde0e6)"></div>
<svg class="a" style="left:212px;top:137px" width="8" height="5" viewBox="0 0 8 5"><path d="M.5 .5h7L4 4.5z" fill="#6a7078"/></svg>
<div class="a" style="left:15px;top:133px;font-size:11.3px;color:#111;line-height:14px;white-space:nowrap">Color Lidar by Elevation</div>
<svg class="a" style="left:231px;top:128px" width="22" height="22" viewBox="0 0 20 20"><rect x="8.2" y="0" width="3.6" height="4" transform="rotate(0 10 10)" fill="#173f63"/><rect x="8.2" y="0" width="3.6" height="4" transform="rotate(45 10 10)" fill="#173f63"/><rect x="8.2" y="0" width="3.6" height="4" transform="rotate(90 10 10)" fill="#173f63"/><rect x="8.2" y="0" width="3.6" height="4" transform="rotate(135 10 10)" fill="#173f63"/><rect x="8.2" y="0" width="3.6" height="4" transform="rotate(180 10 10)" fill="#173f63"/><rect x="8.2" y="0" width="3.6" height="4" transform="rotate(225 10 10)" fill="#173f63"/><rect x="8.2" y="0" width="3.6" height="4" transform="rotate(270 10 10)" fill="#173f63"/><rect x="8.2" y="0" width="3.6" height="4" transform="rotate(315 10 10)" fill="#173f63"/><circle cx="10" cy="10" r="7.2" fill="#fff" stroke="#173f63" stroke-width="2.8"/><circle cx="8.5" cy="6.8" r="1" fill="#c82828"/><circle cx="10.8" cy="8.3" r="1" fill="#c82828"/><path d="M6 13h8" stroke="#6a4a2a" stroke-width="1.6" stroke-dasharray="1.6 .6"/></svg>
<svg class="a" style="left:261px;top:128px" width="22" height="22" viewBox="0 0 20 20"><rect x="8.2" y="0" width="3.6" height="4" transform="rotate(0 10 10)" fill="#173f63"/><rect x="8.2" y="0" width="3.6" height="4" transform="rotate(45 10 10)" fill="#173f63"/><rect x="8.2" y="0" width="3.6" height="4" transform="rotate(90 10 10)" fill="#173f63"/><rect x="8.2" y="0" width="3.6" height="4" transform="rotate(135 10 10)" fill="#173f63"/><rect x="8.2" y="0" width="3.6" height="4" transform="rotate(180 10 10)" fill="#173f63"/><rect x="8.2" y="0" width="3.6" height="4" transform="rotate(225 10 10)" fill="#173f63"/><rect x="8.2" y="0" width="3.6" height="4" transform="rotate(270 10 10)" fill="#173f63"/><rect x="8.2" y="0" width="3.6" height="4" transform="rotate(315 10 10)" fill="#173f63"/><circle cx="10" cy="10" r="7.2" fill="#fff" stroke="#173f63" stroke-width="2.8"/><path d="M4.5 14.5l2.5-4 2 2 2.5-5.5 3.8 7.5c-1 1.8-3 2.7-5.3 2.7s-4.3-1-5.5-2.7z" fill="#6a3e1e"/></svg>
<svg class="a" style="left:291px;top:128px" width="22" height="22" viewBox="0 0 20 20"><rect x="8.2" y="0" width="3.6" height="4" transform="rotate(0 10 10)" fill="#173f63"/><rect x="8.2" y="0" width="3.6" height="4" transform="rotate(45 10 10)" fill="#173f63"/><rect x="8.2" y="0" width="3.6" height="4" transform="rotate(90 10 10)" fill="#173f63"/><rect x="8.2" y="0" width="3.6" height="4" transform="rotate(135 10 10)" fill="#173f63"/><rect x="8.2" y="0" width="3.6" height="4" transform="rotate(180 10 10)" fill="#173f63"/><rect x="8.2" y="0" width="3.6" height="4" transform="rotate(225 10 10)" fill="#173f63"/><rect x="8.2" y="0" width="3.6" height="4" transform="rotate(270 10 10)" fill="#173f63"/><rect x="8.2" y="0" width="3.6" height="4" transform="rotate(315 10 10)" fill="#173f63"/><circle cx="10" cy="10" r="7.2" fill="#fff" stroke="#173f63" stroke-width="2.8"/><rect x="5.5" y="5.5" width="4" height="10" fill="#dfe6ee" stroke="#4a6784" stroke-width=".6"/><path d="M6.2 7h1M8 7h1M6.2 9.5h1M8 9.5h1M6.2 12h1M8 12h1" stroke="#173f63" stroke-width=".9"/><circle cx="12" cy="11" r="3.5" fill="#a6cf5c"/><path d="M12 14.5v-3M12 12.5l-1.3-1.3M12 12l1.2-1" stroke="#4a3a1a" stroke-width=".8"/></svg>
<svg class="a" style="left:321px;top:129px" width="20" height="20" viewBox="0 0 20 20"><path d="M1.5 2h17v13c-2 0-2 2-4 2s-2-2-4-2-2 2-4 2-2-2-4-2-1 1-1 1z" fill="#a6cf5c"/><path d="M1.5 2h17" stroke="#2a3a2a" stroke-width="1"/><circle cx="1.8" cy="2" r="1.6" fill="#111"/><circle cx="18.2" cy="2" r="1.6" fill="#111"/><circle cx="10" cy="8" r="1.5" fill="#fff" opacity=".5"/><circle cx="13" cy="11" r="1.5" fill="#fff" opacity=".5"/><circle cx="8" cy="17" r="1.4" fill="#c0dc90"/><circle cx="13" cy="18" r="1.4" fill="#c0dc90"/></svg>
<div class="a" style="left:350px;top:130px;width:1px;height:18px;background:#a9afb9"></div><div class="a" style="left:351px;top:130px;width:1px;height:18px;background:#fafbfc"></div>
<svg class="a" style="left:360px;top:129px" width="20" height="20" viewBox="0 0 20 20"><circle cx="3.5" cy="1.8" r="1.4" fill="#2a1a10"/><circle cx="7" cy="1.8" r="1.4" fill="#b82830"/><circle cx="10.5" cy="1.8" r="1.4" fill="#f0902a"/><circle cx="14" cy="1.8" r="1.4" fill="#a6cf5c"/><path d="M4 5.5h12L11.5 11v4H8.5v-4z" fill="#f6c860" stroke="#8a6a3a" stroke-width=".9"/><circle cx="10" cy="18.5" r="1.5" fill="#f0902a"/></svg>
<svg class="a" style="left:390px;top:129px" width="20" height="20" viewBox="0 0 20 20"><rect x="1.5" y="5.5" width="13" height="13" fill="#a6cf5c" stroke="#8ea0b4" stroke-width="1.4"/><rect x="2" y="6" width="12" height="2" fill="#50709a" opacity=".6"/><path d="M7 13l8-8M13 3l4 4M15.5 1.5c1-1 2.5-1 3 0s0 2-1 3" stroke="#173f63" stroke-width="1.8" fill="none"/><path d="M7 13l8-8" stroke="#d0e4f0" stroke-width=".8"/></svg>
<svg class="a" style="left:443px;top:129px" width="20" height="20" viewBox="0 0 20 20"><path d="M1 19L4 9l2 1.5L9.5 2l3 5 2-1.5 4.5 13z" fill="#6a3e1e"/></svg>
<svg class="a" style="left:473px;top:129px" width="20" height="20" viewBox="0 0 20 20"><rect x="1" y="18" width="18" height="1.6" fill="#4a6784"/><path d="M6 17c0-4-1-8-3-11M8 17c0-5 0-9 1-14M10 17c0-4 1-7 3-9M12 17c1-3 2-5 5-7M9 17c-1-3-2-5-4-6M11 17c1-2 2-3 3-4" stroke="#7ab040" stroke-width="1.2" fill="none"/></svg>
<svg class="a" style="left:503px;top:129px" width="20" height="20" viewBox="0 0 20 20"><rect x="1" y="18" width="18" height="1.6" fill="#4a6784"/><path d="M10 17.5v-2M3 15c-2 0-2-3 0-4-1-2 1-4 3-3 0-3 4-4 6-2 2-1 5 0 5 3 2 1 2 4 0 5.5z" fill="#a6cf5c" stroke="#4a6a2a" stroke-width="1"/><path d="M8 12c1-1 3-1 4 0" stroke="#4a6a2a" stroke-width=".8" fill="none"/></svg>
<svg class="a" style="left:533px;top:129px" width="20" height="20" viewBox="0 0 20 20"><rect x="1" y="18" width="18" height="1.6" fill="#4a6784"/><path d="M10 18v-7M10 14l-2.5-2.5M10 13l2.5-2" stroke="#4a3218" stroke-width="1.6" fill="none"/><path d="M4.5 11c-3 0-3.5-4-1-5 0-3 3-5 6-3.5 2-2 6-1 6.5 2 2.5 1 2.5 5.5-.5 6.5-2 1-3.5 0-5 .5-2 .5-3.5 1-6-.5z" fill="#a6cf5c" stroke="#4a6a2a" stroke-width="1"/></svg>
<svg class="a" style="left:563px;top:129px" width="20" height="20" viewBox="0 0 20 20"><rect x="1" y="18" width="18" height="1.6" fill="#4a6784"/><rect x="4.5" y="1.5" width="11" height="16.5" fill="#c8dcea" stroke="#4a6784" stroke-width="1"/><path d="M6.5 4h2M9.5 4h2M12.5 4h1M6.5 7.5h2M9.5 7.5h2M12.5 7.5h1M6.5 11h2M9.5 11h2M12.5 11h1" stroke="#173f63" stroke-width="2"/><rect x="8.5" y="14" width="3" height="4" fill="#173f63"/></svg>
<svg class="a" style="left:593px;top:129px" width="20" height="20" viewBox="0 0 20 20"><rect x="1" y="18" width="18" height="1.6" fill="#4a6784"/><path d="M10 18V1" stroke="#f0a050" stroke-width="2.2"/><path d="M7 4h6M7.5 7h5" stroke="#f0a050" stroke-width="1.2"/><path d="M1 4c3 0 6 1 9 3 3-2 6-3 9-3M1 8c3 0 6 1 9 2 3-1 6-2 9-2M1 12c3-1 6-2 9-4 3 2 6 3 9 4" stroke="#2e4a68" stroke-width=".8" fill="none"/></svg>
<svg class="a" style="left:623px;top:129px" width="20" height="20" viewBox="0 0 20 20"><path d="M10 1c-2 3-4 5.5-4 8 0 2.2 1.8 4 4 4s4-1.8 4-4c0-2.5-2-5-4-8z" fill="#5aa4c8" stroke="#2e5a78" stroke-width="1"/><path d="M1 17c1.5-2 3 1.5 4.5 0s3 1.5 4.5 0 3 1.5 4.5 0 3 1.5 4.5 0" stroke="#2e4a68" stroke-width="1.2" fill="none"/></svg>
<svg class="a" style="left:653px;top:129px" width="20" height="20" viewBox="0 0 20 20"><circle cx="7.5" cy="4" r="1.4" fill="#c82828"/><circle cx="10.5" cy="6.5" r="1.4" fill="#c82828"/><circle cx="2" cy="17.5" r="1.3" fill="#5a3a1a"/><circle cx="6" cy="17.5" r="1.3" fill="#5a3a1a"/><circle cx="10" cy="17.5" r="1.3" fill="#5a3a1a"/><circle cx="14" cy="17.5" r="1.3" fill="#5a3a1a"/><circle cx="18" cy="17.5" r="1.3" fill="#5a3a1a"/></svg>
<svg class="a" style="left:683px;top:129px" width="20" height="20" viewBox="0 0 20 20"><rect x="1" y="18" width="18" height="1.6" fill="#5d7896"/><circle cx="13" cy="6" r="4" fill="none" stroke="#5d7896" stroke-width="2"/><path d="M10.5 9l-7.5 7.5M5 14.5l2 2M7 12.5l1.5 1.5" stroke="#5d7896" stroke-width="2"/></svg>
<div class="a" style="left:0;top:157px;width:201px;height:874px;background:#fff;border-left:1px solid #a3a8b0;border-right:1px solid #c4c8ce;border-bottom:1px solid #a3a8b0"></div>
<div class="a" style="left:1px;top:156px;width:199px;height:20px;background:#bcc3cd;border-top:1px solid #eef1f5;border-right:1px solid #e8ecf2"></div>
<div class="a" style="left:5px;top:159px;font-size:11px;color:#3b4656;line-height:14px">Control Center (1 Layers)</div>
<svg class="a" style="left:185px;top:160px" width="10" height="10" viewBox="0 0 10 10"><path d="M1.5 1.5l7 7M8.5 1.5l-7 7" stroke="#737b86" stroke-width="1.1"/></svg>
<div class="a" style="left:8px;top:183px;width:9px;height:9px;border:1px solid #b4b8be;border-radius:1px;background:linear-gradient(#fbfbfc,#e6e8ec)"></div>
<div class="a" style="left:10px;top:187px;width:5px;height:1px;background:#3b5578"></div>
<div class="a" style="left:18px;top:187px;width:6px;height:1px;background:repeating-linear-gradient(90deg,#777 0 1px,transparent 1px 2px)"></div>
<div class="a" style="left:31px;top:195px;width:1px;height:10px;background:repeating-linear-gradient(#777 0 1px,transparent 1px 2px)"></div>
<div class="a" style="left:31px;top:205px;width:12px;height:1px;background:repeating-linear-gradient(90deg,#777 0 1px,transparent 1px 2px)"></div>
<svg class="a" style="left:24px;top:180px" width="13" height="13" viewBox="0 0 13 13"><rect x="0.5" y="0.5" width="12" height="12" fill="#fff" stroke="#000"/><path d="M2.5 6.5l2.5 3 4.5-6.5" stroke="#000" stroke-width="1.4" fill="none"/></svg>
<svg class="a" style="left:38px;top:179px" width="14" height="14" viewBox="0 0 14 14"><rect x="0.5" y="0.5" width="13" height="13" fill="#f2f224" stroke="#35a030"/><rect x="2" y="2" width="10" height="5" fill="#e8e0c0" opacity=".6"/><path d="M2 10l2-3 2 2 2-3 2 2 2-2v3H2z" fill="#c33"/><path d="M2 12c1-2 2 0 3-1s2-2 3 0 2-1 4 0" stroke="#2a7a20" stroke-width="1.3" fill="none"/></svg>
<div class="a" style="left:58px;top:179px;font-size:11.7px;color:#111;line-height:14px;white-space:nowrap">Current Workspace</div>
<svg class="a" style="left:43px;top:198px" width="13" height="13" viewBox="0 0 13 13"><rect x="0.5" y="0.5" width="12" height="12" fill="#fff" stroke="#000"/><path d="M2.5 6.5l2.5 3 4.5-6.5" stroke="#000" stroke-width="1.4" fill="none"/></svg>
<svg class="a" style="left:57px;top:197px" width="14" height="14" viewBox="0 0 14 14"><rect x="0.5" y="0.5" width="13" height="13" fill="#f2f224" stroke="#35a030"/><rect x="2" y="2" width="10" height="5" fill="#e8e0c0" opacity=".6"/><path d="M2 10l2-3 2 2 2-3 2 2 2-2v3H2z" fill="#c33"/><path d="M2 12c1-2 2 0 3-1s2-2 3 0 2-1 4 0" stroke="#2a7a20" stroke-width="1.3" fill="none"/></svg>
<div class="a" style="left:77px;top:197px;font-size:11.2px;color:#111;line-height:14px;white-space:nowrap">N44E034.hgt</div>
<div class="a" style="left:201px;top:157px;width:4px;height:874px;background:#d4d8df"></div>
<div class="a" style="left:205px;top:157px;width:1714px;height:873px;background:#fff;border-left:1px solid #6d7177;border-top:1px solid #6d7177;border-right:1px solid #d8dbe0"></div>
<div class="a" style="left:207px;top:159px;width:133px;height:804px;border-left:1px solid #000;border-top:1px solid #000;border-right:2px solid #000;border-bottom:2px solid #000;background:#fff"></div>
<div class="a" style="left:294px;top:178px;width:36px;height:768px;border:1px solid #000;background:linear-gradient(#ff0000 0%,#ff4800 18%,#ff8800 32.5%,#ffb400 42%,#ffff00 54%,#80ff00 67%,#00ff00 80%,#00ffa0 88.5%,#00ffff 93.4%,#0090ff 96%,#0008f0 100%)"></div>
<div class="a" style="left:282px;top:178px;width:12px;height:1px;background:#000"></div>
<div class="a" style="left:282px;top:196px;width:12px;height:1px;background:#000"></div>
<div class="serif" style="right:1649px;top:187px">1,500 m</div>
<div class="a" style="left:282px;top:320px;width:12px;height:1px;background:#000"></div>
<div class="serif" style="right:1649px;top:311px">1,250 m</div>
<div class="a" style="left:282px;top:445px;width:12px;height:1px;background:#000"></div>
<div class="serif" style="right:1649px;top:436px">1,000 m</div>
<div class="a" style="left:282px;top:569px;width:12px;height:1px;background:#000"></div>
<div class="serif" style="right:1649px;top:560px">750 m</div>
<div class="a" style="left:282px;top:694px;width:12px;height:1px;background:#000"></div>
<div class="serif" style="right:1649px;top:685px">500 m</div>
<div class="a" style="left:282px;top:818px;width:12px;height:1px;background:#000"></div>
<div class="serif" style="right:1649px;top:809px">250 m</div>
<div class="a" style="left:282px;top:943px;width:12px;height:1px;background:#000"></div>
<div class="serif" style="right:1649px;top:934px">0 m</div>
<div class="a" style="left:282px;top:945px;width:12px;height:1px;background:#000"></div>
<div class="a" style="left:207px;top:965px;width:385px;height:63px;border-left:1px solid #000;border-top:1px solid #000;border-right:2px solid #000;border-bottom:2px solid #000;background:#fff"></div>
<div class="a" style="left:236px;top:982px;width:330px;height:2px;background:#000"></div>
<div class="a" style="left:235px;top:974px;width:2px;height:19px;background:#000"></div>
<div class="a" style="left:289px;top:974px;width:2px;height:19px;background:#000"></div>
<div class="a" style="left:344px;top:974px;width:2px;height:19px;background:#000"></div>
<div class="a" style="left:399px;top:974px;width:2px;height:19px;background:#000"></div>
<div class="a" style="left:454px;top:974px;width:2px;height:19px;background:#000"></div>
<div class="a" style="left:509px;top:974px;width:2px;height:19px;background:#000"></div>
<div class="a" style="left:564px;top:974px;width:2px;height:19px;background:#000"></div>
<div class="serif" style="left:176px;width:120px;text-align:center;top:1005px">0 km</div>
<div class="serif" style="left:285px;width:120px;text-align:center;top:1005px">20 km</div>
<div class="serif" style="left:395px;width:120px;text-align:center;top:1005px">40 km</div>
<div class="serif" style="left:505px;width:120px;text-align:center;top:1005px">60 km</div>
<svg class="a" style="left:806px;top:277px" width="612" height="613" viewBox="0 0 612 613">
<defs>
<filter id="jag" x="-5%" y="-5%" width="110%" height="110%" color-interpolation-filters="sRGB"><feTurbulence type="fractalNoise" baseFrequency="0.06" numOctaves="2" seed="3" result="t"/><feDisplacementMap in="SourceGraphic" in2="t" scale="4" xChannelSelector="R" yChannelSelector="G"/></filter>
<clipPath id="landclip"><path d="M0 0H612V101 L612 101 L601 100 L584 103 L567 102 L557 108 L536 108 L517 111 L494 110 L461 113 L444 115 L421 122 L394 130 L364 140 L336 152 L320 161 L300 170 L275 183 L255 195 L250 203 L245 215 L237 225 L230 233 L225 246 L217 255 L212 263 L212 275 L200 276 L178 275 L167 281 L163 290 L150 298 L130 301 L107 303 L104 303 L99 312 L94 319 L89 329 L83 337 L79 348 L63 351 L45 353 L28 358 L17 361 L5 365 L0 366Z"/></clipPath>
<filter id="blur1" color-interpolation-filters="sRGB" x="-20%" y="-20%" width="140%" height="140%"><feGaussianBlur stdDeviation="8"/><feColorMatrix type="saturate" values="1.3"/></filter>
<filter id="blur2" color-interpolation-filters="sRGB" x="-20%" y="-20%" width="140%" height="140%"><feGaussianBlur stdDeviation="6"/></filter>
<filter id="blur3" color-interpolation-filters="sRGB" x="-20%" y="-20%" width="140%" height="140%"><feGaussianBlur stdDeviation="14"/></filter>
<filter id="hs1" x="0" y="0" width="100%" height="100%" filterUnits="objectBoundingBox" color-interpolation-filters="sRGB">
 <feTurbulence type="fractalNoise" baseFrequency="0.006 0.022" numOctaves="3" seed="7" result="n1"/>
 <feTurbulence type="turbulence" baseFrequency="0.028 0.05" numOctaves="4" seed="12" result="n2"/>
 <feComposite in="n1" in2="n2" operator="arithmetic" k1="0" k2=".65" k3=".45" k4="-.05" result="n"/>
 <feColorMatrix in="n" type="matrix" values="0 0 0 0 0  0 0 0 0 0  0 0 0 0 0  1 0 0 0 0" result="h"/>
 <feDiffuseLighting in="h" surfaceScale="22" diffuseConstant="1.9" lighting-color="#fff"><feDistantLight azimuth="315" elevation="30"/></feDiffuseLighting>
</filter>
<filter id="hs3" x="0" y="0" width="100%" height="100%" filterUnits="objectBoundingBox" color-interpolation-filters="sRGB">
 <feTurbulence type="fractalNoise" baseFrequency="0.011 0.024" numOctaves="4" seed="21" result="n"/>
 <feColorMatrix in="n" type="matrix" values="0 0 0 0 0  0 0 0 0 0  0 0 0 0 0  1 0 0 0 0" result="h"/>
 <feDiffuseLighting in="h" surfaceScale="16" diffuseConstant="1.9" lighting-color="#fff"><feDistantLight azimuth="315" elevation="32"/></feDiffuseLighting>
</filter>
<linearGradient id="mg3" x1="0" y1="0" x2="1" y2="0.3"><stop offset="0.0" stop-color="#999"/><stop offset="0.45" stop-color="#777"/><stop offset="0.7" stop-color="#000"/></linearGradient>
<mask id="m3"><rect width="612" height="613" fill="url(#mg3)"/></mask>
<filter id="hs2" x="0" y="0" width="100%" height="100%" filterUnits="objectBoundingBox" color-interpolation-filters="sRGB">
 <feTurbulence type="fractalNoise" baseFrequency="0.006 0.022" numOctaves="3" seed="11" result="n1"/>
 <feTurbulence type="turbulence" baseFrequency="0.03 0.055" numOctaves="4" seed="16" result="n2"/>
 <feComposite in="n1" in2="n2" operator="arithmetic" k1="0" k2=".65" k3=".45" k4="-.05" result="n"/>
 <feColorMatrix in="n" type="matrix" values="0 0 0 0 0  0 0 0 0 0  0 0 0 0 0  1 0 0 0 0" result="h"/>
 <feDiffuseLighting in="h" surfaceScale="12" diffuseConstant="1.9" lighting-color="#fff"><feDistantLight azimuth="315" elevation="32"/></feDiffuseLighting>
</filter>
<linearGradient id="mgL" x1="0" y1="0" x2="1" y2="0"><stop offset="0.3" stop-color="#fff"/><stop offset="0.75" stop-color="#555"/></linearGradient>
<linearGradient id="mgR" x1="0" y1="0" x2="1" y2="0"><stop offset="0.3" stop-color="#666"/><stop offset="0.75" stop-color="#fff"/></linearGradient>
<radialGradient id="mgTL" cx="0.05" cy="0.0" r="0.62" gradientTransform="translate(0 0) scale(1.25 1)"><stop offset="0" stop-color="#1a1a1a"/><stop offset="0.55" stop-color="#5a5a5a"/><stop offset="0.8" stop-color="#c0c0c0"/><stop offset="1" stop-color="#fff"/></radialGradient>
<mask id="mL"><rect width="612" height="613" fill="url(#mgL)"/></mask>
<mask id="mR"><rect width="612" height="613" fill="url(#mgR)"/></mask>
<filter id="blur4" color-interpolation-filters="sRGB" x="-50%" y="-50%" width="200%" height="200%"><feGaussianBlur stdDeviation="35"/></filter>
<mask id="mTL"><rect width="612" height="613" fill="#fff"/><g filter="url(#blur4)"><ellipse cx="70" cy="20" rx="230" ry="95" fill="#000" opacity=".72" transform="rotate(12 70 20)"/>
<ellipse cx="322" cy="62" rx="62" ry="36" fill="#000" opacity=".85"/><ellipse cx="180" cy="138" rx="20" ry="18" fill="#000" opacity=".4"/></g></mask>
</defs>
<clipPath id="mapclip"><rect width="612" height="613"/></clipPath>
<g clip-path="url(#mapclip)">
<rect width="612" height="613" fill="#30d010"/>
<g filter="url(#blur1)"><ellipse cx="64" cy="28" rx="130" ry="70" fill="#28e040" opacity="1"/>
<ellipse cx="34" cy="13" rx="60" ry="30" fill="#30e060" opacity="1"/>
<ellipse cx="94" cy="103" rx="90" ry="50" fill="#38e000" opacity="1"/>
<ellipse cx="204" cy="53" rx="70" ry="60" fill="#a8e000" opacity="1"/>
<ellipse cx="244" cy="68" rx="45" ry="35" fill="#c8d010" opacity="1"/>
<ellipse cx="322" cy="61" rx="68" ry="46" fill="#d8b030" opacity="1"/>
<ellipse cx="314" cy="97" rx="40" ry="10" fill="#f08020" opacity="1"/>
<ellipse cx="434" cy="43" rx="90" ry="45" fill="#b0e000" opacity="1"/>
<ellipse cx="524" cy="23" rx="70" ry="35" fill="#c8e000" opacity="1"/>
<ellipse cx="584" cy="53" rx="40" ry="35" fill="#80e000" opacity="1"/>
<ellipse cx="179" cy="141" rx="24" ry="26" fill="#f0b030" opacity="1"/>
<ellipse cx="186" cy="165" rx="12" ry="7" fill="#ff4010" opacity="1"/>
<ellipse cx="258" cy="131" rx="28" ry="15" fill="#ff6818" opacity="1"/>
<ellipse cx="44" cy="193" rx="60" ry="60" fill="#60e000" opacity="1"/>
<ellipse cx="149" cy="195" rx="45" ry="22" fill="#d0e000" opacity="1"/>
<ellipse cx="154" cy="235" rx="45" ry="26" fill="#ff5000" opacity="1"/>
<ellipse cx="129" cy="263" rx="28" ry="16" fill="#f83800" opacity="1"/>
<ellipse cx="199" cy="223" rx="20" ry="16" fill="#e0e000" opacity="1"/>
<ellipse cx="34" cy="323" rx="45" ry="40" fill="#f08018" opacity="1"/>
<ellipse cx="26" cy="285" rx="22" ry="14" fill="#ffe830" opacity="1"/>
<ellipse cx="68" cy="319" rx="14" ry="10" fill="#b0f000" opacity="1"/></g>
<g filter="url(#blur2)" opacity=".95">
 <path d="M276 31 L354 23 L390 53 L386 101 L314 111 L284 83Z" fill="#d8b838"/>
 <ellipse cx="319" cy="101" rx="22" ry="8" fill="#f08a20"/>
 <path d="M160 118 L196 115 L206 153 L186 168 L166 153Z" fill="#e0b040"/>
 <ellipse cx="184" cy="163" rx="10" ry="6" fill="#ff4010"/>
</g>
<path d="M613.1 89.0 L600.1 88.0 L583.3 91.0 L564.8 90.2 L554.7 96.2 L535.1 96.0 L516.4 99.0 L493.6 98.0 L459.8 101.1 L441.4 103.3 L417.6 110.5 L390.4 118.6 L359.7 128.8 L330.8 141.2 L314.6 150.3 L294.7 159.2 L269.2 172.5 L247.5 185.6 L239.3 197.6 L234.7 208.9 L227.8 217.3 L219.6 227.0 L214.7 239.9 L207.5 247.7 L200.4 260.1 L203.2 266.9 L200.0 264.0 L176.2 263.1 L158.5 272.5 L154.5 281.5 L146.2 286.6 L128.6 289.1 L106.1 291.0 L95.0 295.0 L88.8 305.6 L83.7 312.9 L78.8 322.7 L72.4 331.4 L72.1 338.2 L61.3 339.1 L42.6 341.2 L24.7 346.5 L13.5 349.5 L1.6 353.5 L-2.4 354.2" fill="none" stroke="#00d8a0" stroke-width="20" filter="url(#blur2)" opacity=".7"/>
<path d="M612 101 L601 100 L584 103 L567 102 L557 108 L536 108 L517 111 L494 110 L461 113 L444 115 L421 122 L394 130 L364 140 L336 152 L320 161 L300 170 L275 183 L255 195 L250 203 L245 215 L237 225 L230 233 L225 246 L217 255 L212 263 L212 275 L200 276 L178 275 L167 281 L163 290 L150 298 L130 301 L107 303 L104 303 L99 312 L94 319 L89 329 L83 337 L79 348 L63 351 L45 353 L28 358 L17 361 L5 365 L0 366" fill="none" stroke="#00e8f0" stroke-width="14" filter="url(#blur2)" opacity=".95"/>
<path d="M615.8 59.2 L598.0 58.1 L581.5 61.1 L559.4 60.7 L549.0 66.8 L532.9 66.1 L515.0 69.0 L492.5 68.0 L456.8 71.2 L434.8 74.0 L408.9 81.8 L381.4 89.9 L349.1 100.7 L317.9 114.1 L301.2 123.4 L281.6 132.3 L254.6 146.3 L228.8 162.2 L212.4 184.2 L208.8 193.6 L204.7 198.1 L193.5 212.2 L188.8 224.6 L183.6 229.5 L171.3 252.8 L181.1 246.5 L200.0 234.0 L171.7 233.5 L137.3 251.3 L133.3 260.3 L136.7 258.2 L125.1 259.3 L103.8 261.1 L72.6 275.1 L63.4 289.7 L57.8 297.7 L53.2 307.1 L45.8 317.4 L54.9 313.6 L56.9 309.4 L36.8 311.8 L16.5 317.6 L4.8 320.8 L-6.9 324.7 L-8.2 324.8" fill="none" stroke="#000" stroke-width="50" filter="url(#blur3)" opacity=".3" style="mix-blend-mode:multiply"/>
<g style="mix-blend-mode:multiply" filter="url(#blur3)" opacity=".55">
 <ellipse cx="230" cy="200" rx="80" ry="40" fill="#000" transform="rotate(-30 230 200)"/>
 <ellipse cx="150" cy="288" rx="55" ry="16" fill="#000" transform="rotate(-25 150 288)"/>
 <ellipse cx="75" cy="335" rx="45" ry="16" fill="#000" transform="rotate(-20 75 335)"/>
 <ellipse cx="450" cy="95" rx="140" ry="18" fill="#000" transform="rotate(-8 450 95)"/>
 <ellipse cx="80" cy="160" rx="70" ry="25" fill="#000" opacity=".5" transform="rotate(25 80 160)"/>
</g>
<g style="mix-blend-mode:multiply" mask="url(#mTL)">
 <g mask="url(#mL)"><rect x="-400" y="-400" width="1400" height="1400" filter="url(#hs1)" transform="rotate(28 306 306)"/></g>
 <g mask="url(#m3)"><rect x="-400" y="-400" width="1400" height="1400" filter="url(#hs3)" transform="rotate(24 306 306)"/></g>
 <g mask="url(#mR)"><rect x="-400" y="-400" width="1400" height="1400" filter="url(#hs2)" transform="rotate(65 306 306)"/></g>
</g>
</g>
<g clip-path="url(#mapclip)"><path d="M640 101 L612 101 L601 100 L584 103 L567 102 L557 108 L536 108 L517 111 L494 110 L461 113 L444 115 L421 122 L394 130 L364 140 L336 152 L320 161 L300 170 L275 183 L255 195 L250 203 L245 215 L237 225 L230 233 L225 246 L217 255 L212 263 L212 275 L200 276 L178 275 L167 281 L163 290 L150 298 L130 301 L107 303 L104 303 L99 312 L94 319 L89 329 L83 337 L79 348 L63 351 L45 353 L28 358 L17 361 L5 365 L0 366 L-30 366 L-30 650 L640 650Z" fill="#0009b8" filter="url(#jag)"/></g>
</svg>
<div class="a" style="left:0;top:1030px;width:1920px;height:2px;background:#9da2aa"></div>
<div class="a" style="left:0;top:1032px;width:1920px;height:18px;background:linear-gradient(#e6e9ee,#d5d9df 40%,#bcc1ca 80%,#aeb4be)"></div>
<div class="a" style="left:1424px;top:1033px;width:1px;height:17px;background:#6d737c"></div>
<div class="a" style="left:1475px;top:1033px;width:1px;height:17px;background:#6d737c"></div>
<div class="a" style="left:1727px;top:1033px;width:1px;height:17px;background:#6d737c"></div>
<div class="a" style="left:1425px;top:1032px;width:492px;height:18px;background:linear-gradient(#edf0f4,#d9dde3 45%,#c4c9d1 80%,#bcc1ca)"></div>
<div class="a" style="left:1424px;top:1033px;width:1px;height:17px;background:#6d737c"></div>
<div class="a" style="left:1475px;top:1033px;width:1px;height:17px;background:#6d737c"></div>
<div class="a" style="left:1727px;top:1033px;width:1px;height:17px;background:#6d737c"></div>
<div class="a" style="left:1917px;top:1032px;width:3px;height:18px;background:linear-gradient(90deg,#8a9098,#6a7078)"></div>
<div class="a" style="left:1428px;top:1036px;width:65px;font-size:10.8px;color:#1a2230;line-height:13px;white-space:nowrap">1:687500</div>
<div class="a" style="left:1479px;top:1036px;width:267px;font-size:10.62px;color:#1a2230;line-height:13px;white-space:nowrap">GEO ( WGS84 ) ( 33.8905643218, 45.4290494405 )</div>
<div class="a" style="left:1731px;top:1036px;width:206px;font-size:10.82px;color:#1a2230;line-height:13px;white-space:nowrap">45° 25' 44.5780" N, 33° 53' 26.0316" E</div>
<div class="a" style="left:4.5px;top:1036px;font-size:11px;color:#1a2230;line-height:13px">For Help, press F1</div>
<svg class="a" style="left:12px;top:1045px" width="30" height="5" viewBox="0 0 30 5"><ellipse cx="15" cy="14" rx="13" ry="13" fill="#dfe8f2" stroke="#3f5f85" stroke-width="1"/></svg>

</body></html>
